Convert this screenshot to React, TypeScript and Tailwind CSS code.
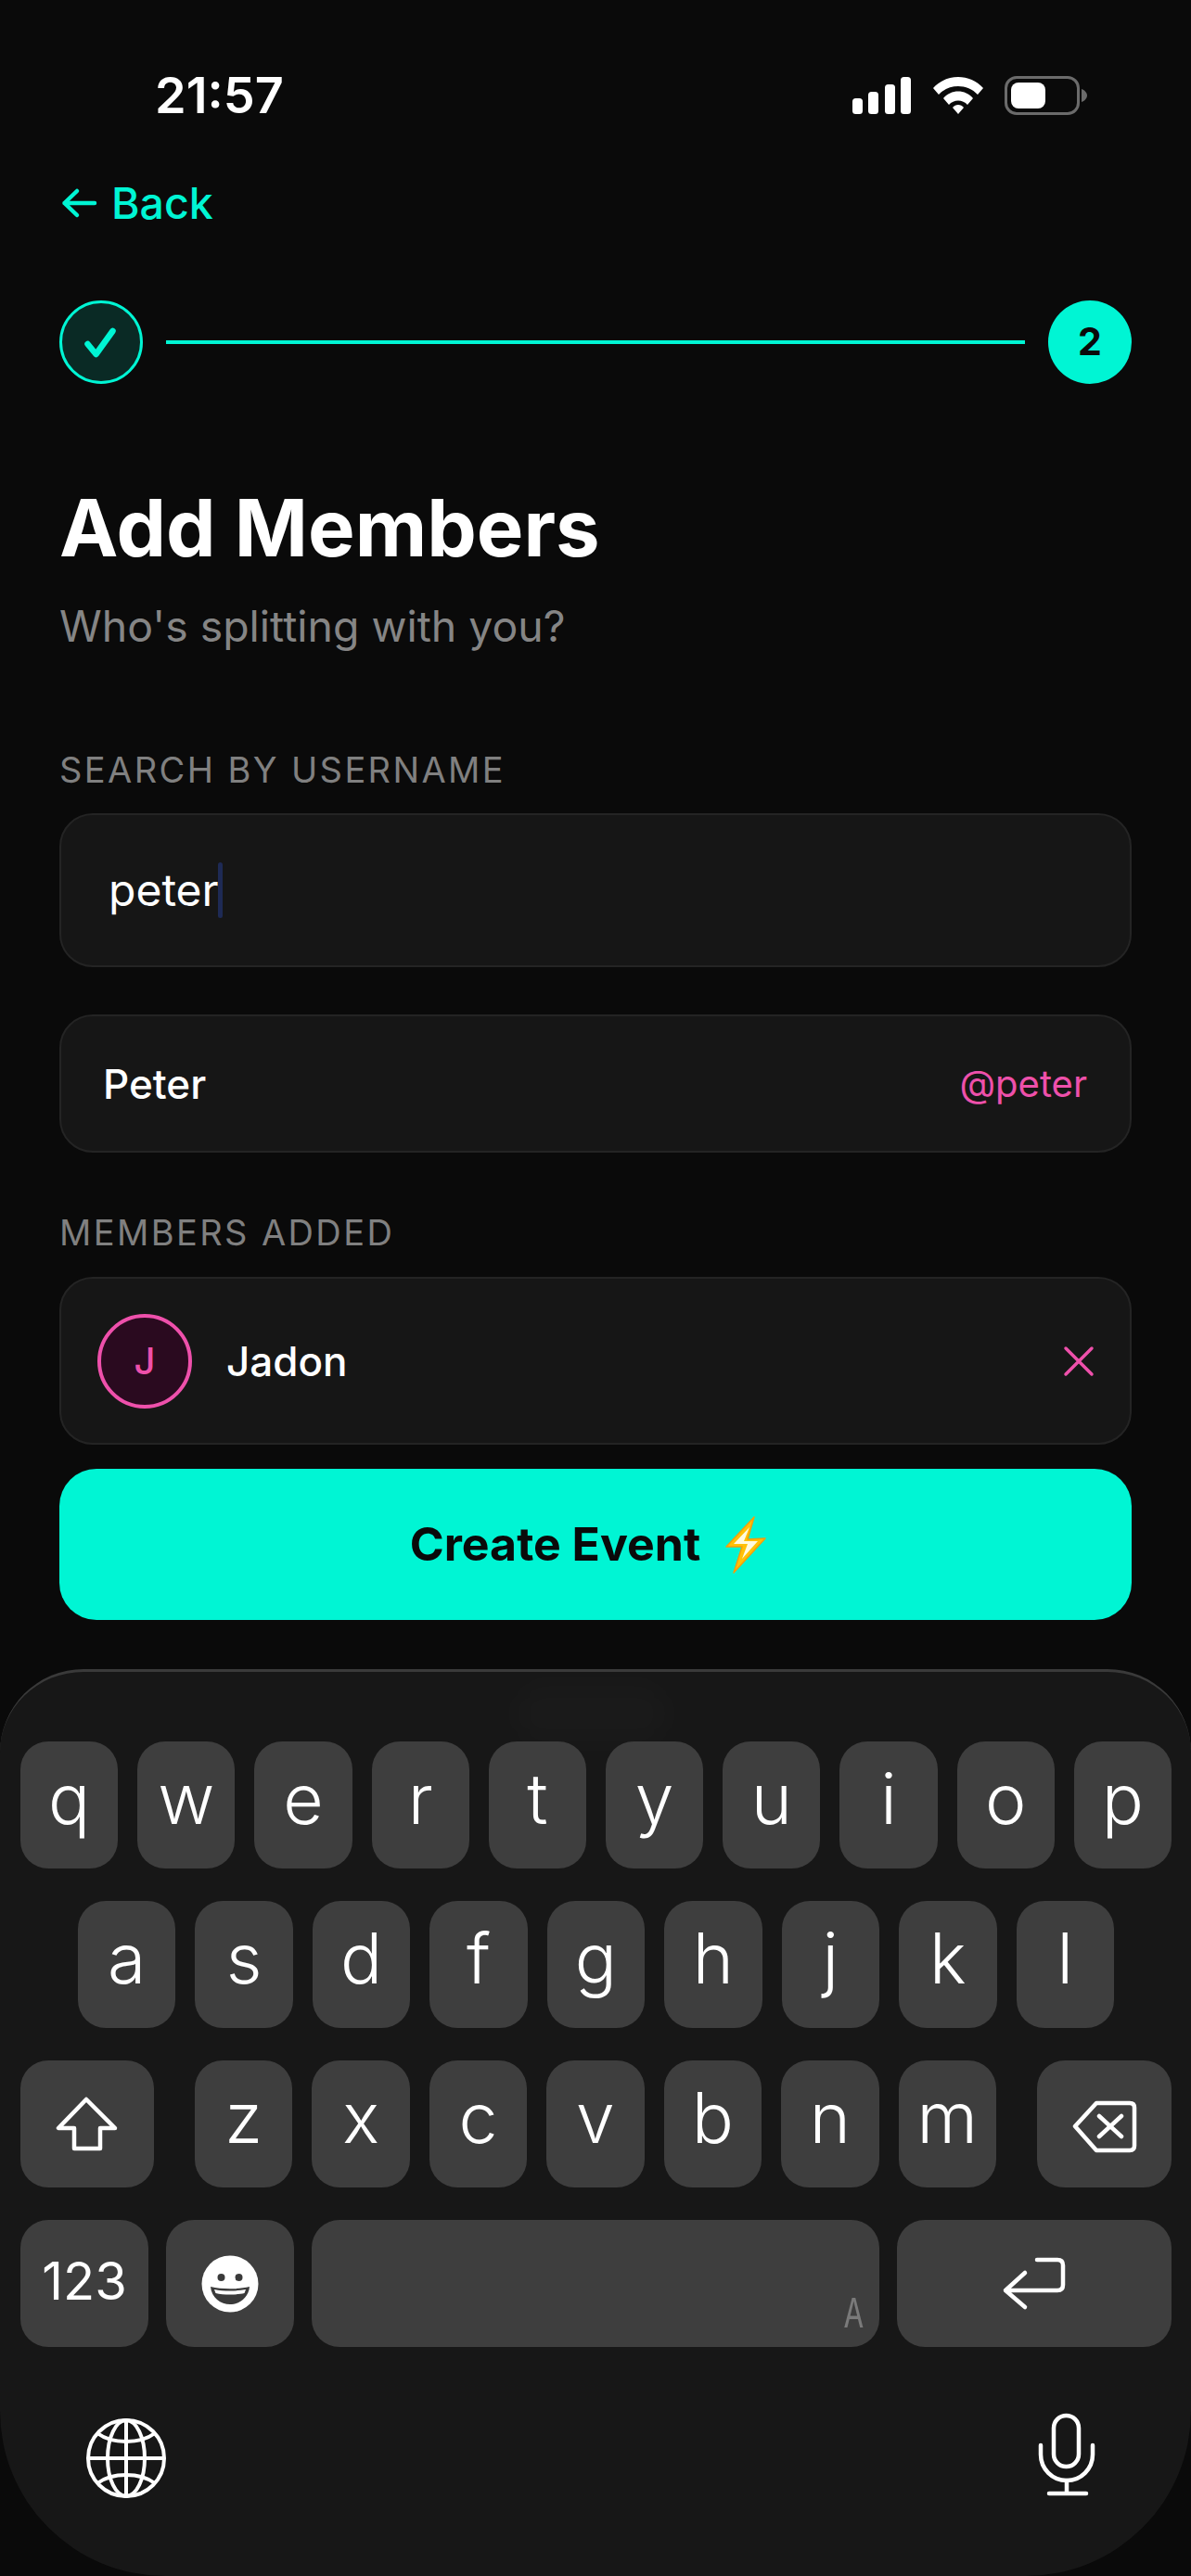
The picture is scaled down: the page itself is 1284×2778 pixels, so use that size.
import React from 'react';

const ROW_1 = ['q', 'w', 'e', 'r', 't', 'y', 'u', 'i', 'o', 'p'];
const ROW_2 = ['a', 's', 'd', 'f', 'g', 'h', 'j', 'k', 'l'];
const ROW_3 = ['z', 'x', 'c', 'v', 'b', 'n', 'm'];

const keyClass =
  'h-[137px] rounded-[30px] bg-[#3e3e3e] flex items-center justify-center text-white';

function LetterKey({ letter }: { letter: string }) {
  return <div className={`${keyClass} flex-1 min-w-0 text-[75px] font-[350] pb-[12px]`}>{letter}</div>;
}

function StatusIcons() {
  return (
    <div className="flex items-center">
      {/* signal */}
      <svg width="64" height="42" viewBox="0 0 64 42" fill="#fff">
        <rect x="0" y="24" width="11" height="17" rx="3.5" />
        <rect x="17" y="17" width="11" height="24" rx="3.5" />
        <rect x="35" y="9" width="11" height="32" rx="3.5" />
        <rect x="52" y="1" width="11" height="40" rx="3.5" />
      </svg>
      {/* wifi */}
      <svg className="ml-[22px]" width="56" height="42" viewBox="0 0 56 42" fill="#fff">
        <path d="M1 13 C15 -3 41 -3 55 13 L49 20 C38 8 18 8 7 20 Z" />
        <path d="M12 24 C20 14 36 14 44 24 L38 31 C33 25 23 25 18 31 Z" />
        <path d="M22 34 C25 30 31 30 34 34 L28 41 Z" />
      </svg>
      {/* battery */}
      <div className="ml-[22px] w-[81px] h-[42px] rounded-[13px] border-[3px] border-[#6b6b6b] p-[4px]">
        <div className="w-[37px] h-full rounded-[8px] bg-white" />
      </div>
      <svg className="ml-[2px]" width="6" height="14" viewBox="0 0 6 14" fill="#6b6b6b">
        <path d="M0 0 C3 1 6 4 6 7 C6 10 3 13 0 14 Z" />
      </svg>
    </div>
  );
}

function GlobeIcon() {
  return (
    <svg width="90" height="90" viewBox="0 0 90 90" fill="none" stroke="#fff" strokeWidth="4">
      <circle cx="45" cy="45" r="41" />
      <ellipse cx="45" cy="45" rx="20" ry="41" />
      <path d="M45 4 V86 M4 45 H86" />
      <path d="M14 18 C30 30 60 30 76 18" />
      <path d="M14 72 C30 60 60 60 76 72" />
    </svg>
  );
}

function MicIcon() {
  return (
    <svg width="68" height="92" viewBox="0 0 68 92" fill="none" stroke="#fff" strokeWidth="4.5" strokeLinecap="round">
      <rect x="20" y="5" width="27" height="55" rx="13.5" />
      <path d="M6 37 V47 A28 28 0 0 0 62 47 V37" />
      <path d="M34 75 V88" />
      <path d="M15 89 H55" />
    </svg>
  );
}

export default function App() {
  return (
    <div className="w-[1284px] h-[2778px] bg-[#0a0a0a] flex flex-col overflow-hidden font-['Inter',sans-serif]">
      {/* Status bar */}
      <div className="h-[126px] mt-[40px] flex items-center justify-between pl-[167px] pr-[112px] text-white">
        <span className="text-[54px] font-semibold leading-none">21:57</span>
        <StatusIcons />
      </div>

      <div className="px-[64px] flex flex-col">
        {/* Back */}
        <div className="mt-[24px] h-[58px] flex items-center gap-[14px] text-[#00f5d4] ml-[2px]">
          <svg width="40" height="40" viewBox="0 0 40 40" fill="none" stroke="#00f5d4" strokeWidth="4.5" strokeLinecap="round" strokeLinejoin="round">
            <path d="M17 7 L3.5 20 L17 33 M3.5 20 H36" />
          </svg>
          <span className="text-[46.5px] font-medium leading-none">Back</span>
        </div>

        {/* Stepper */}
        <div className="mt-[76px] flex items-center gap-[25px]">
          <div className="w-[90px] h-[90px] shrink-0 rounded-full border-[3px] border-[#00f5d4] bg-[#0a2a25] flex items-center justify-center">
            <svg width="44" height="44" viewBox="0 0 44 44" fill="none" stroke="#00f5d4" strokeWidth="6.5" strokeLinecap="round" strokeLinejoin="round">
              <path d="M7.5 24 L16.5 35 L34.5 10" />
            </svg>
          </div>
          <div className="flex-1 h-[4px] bg-[#00f5d4]" />
          <div className="w-[90px] h-[90px] shrink-0 rounded-full bg-[#00f5d4] flex items-center justify-center text-[41px] font-bold text-[#0a0a0a]">
            2
          </div>
        </div>

        {/* Title */}
        <h1 className="mt-[105px] text-[85px] leading-[102px] font-bold text-white">Add Members</h1>
        <p className="mt-[25px] text-[46.4px] leading-[58px] text-[#858585]">Who's splitting with you?</p>

        {/* Search */}
        <div className="mt-[104px] text-[38px] leading-[44px] tracking-[2.4px] text-[#808080]">SEARCH BY USERNAME</div>
        <div className="mt-[25px] h-[166px] rounded-[36px] bg-[#161616] border-2 border-[#242424] flex items-center pl-[51px] text-[48px] text-white">
          <span>peter</span>
          <span className="w-[5px] h-[60px] rounded-full bg-[#1e2a55] -ml-[1px]" />
        </div>

        {/* Search result */}
        <div className="mt-[51px] h-[149px] rounded-[36px] bg-[#161616] border-2 border-[#242424] flex items-center justify-between pl-[45px] pr-[46px]">
          <span className="text-[44px] font-medium text-white">Peter</span>
          <span className="text-[40px] text-[#ee50ab]">@peter</span>
        </div>

        {/* Members */}
        <div className="mt-[64px] text-[38px] leading-[44px] tracking-[2.4px] text-[#808080]">MEMBERS ADDED</div>
        <div className="mt-[26px] h-[181px] rounded-[36px] bg-[#161616] border-2 border-[#242424] flex items-center pl-[39px] pr-[38px]">
          <div className="w-[102px] h-[102px] rounded-full border-4 border-[#ee50ab] bg-[#2a0a1f] flex items-center justify-center text-[40px] font-medium text-[#ee50ab]">
            J
          </div>
          <span className="ml-[37px] flex-1 text-[44px] font-medium text-white">Jadon</span>
          <svg width="34" height="34" viewBox="0 0 34 34" fill="none" stroke="#ee50ab" strokeWidth="3.5" strokeLinecap="round">
            <path d="M3 3 L31 31 M31 3 L3 31" />
          </svg>
        </div>

        {/* Create */}
        <button className="mt-[26px] h-[163px] rounded-[40px] bg-[#00f5d4] flex items-center justify-center gap-[27px] pr-[16px] text-[50px] font-bold text-[#0a0a0a]">
          <span>Create Event</span>
          <svg width="44" height="62" viewBox="0 0 44 62">
            <path d="M31 1 L1 33 L18 33 L9 61 L43 24 L24 25 Z" fill="#ffc107" stroke="#f59e0b" strokeWidth="1.5" strokeLinejoin="round" />
            <path d="M26 12 L9 30 L24 30 L18 46 L35 27 L20 27 Z" fill="#fffbe0" />
          </svg>
        </button>
      </div>

      {/* Keyboard */}
      <div className="relative mt-[53px] flex-1 bg-[#171717] rounded-t-[90px] rounded-b-[178px] border-t-[3px] border-[#3a3a3a] pl-[22px] pr-[21px] pt-[75px] flex flex-col gap-[35px]">
        <div className="absolute left-[553px] top-[10px] w-[170px] h-[70px] rounded-[30px] bg-white/[0.015] blur-lg" />

        <div className="relative flex gap-[21px]">
          {ROW_1.map((k) => (
            <LetterKey key={k} letter={k} />
          ))}
        </div>

        <div className="flex gap-[21px] px-[62px]">
          {ROW_2.map((k) => (
            <LetterKey key={k} letter={k} />
          ))}
        </div>

        <div className="flex">
          <div className={`${keyClass} w-[144px] shrink-0`}>
            <svg width="68" height="60" viewBox="0 0 68 60" fill="none" stroke="#fff" strokeWidth="4.5" strokeLinejoin="round">
              <path d="M33 3 L3 34 H20 V56 H48 V34 H64 Z" />
            </svg>
          </div>
          <div className="flex-1 flex gap-[21px] mx-[44px]">
            {ROW_3.map((k) => (
              <LetterKey key={k} letter={k} />
            ))}
          </div>
          <div className={`${keyClass} w-[145px] shrink-0`}>
            <svg className="mt-[5px]" width="70" height="57" viewBox="0 0 70 57" fill="none" stroke="#fff" strokeWidth="4.5" strokeLinecap="round" strokeLinejoin="round">
              <path d="M26 3 H62 Q67 3 67 8 V49 Q67 54 62 54 H26 L3 28 Z" />
              <path d="M29 17 L53 39 M53 17 L29 39" />
            </svg>
          </div>
        </div>

        <div className="flex gap-[19px]">
          <div className={`${keyClass} w-[138px] shrink-0 text-[56px] font-normal pb-[6px]`}>123</div>
          <div className={`${keyClass} w-[138px] shrink-0`}>
            <svg width="62" height="62" viewBox="-31 -31 62 62">
              <circle cx="0" cy="0" r="30.5" fill="#fff" />
              <circle cx="-9.5" cy="-7" r="4" fill="#3a3a3a" />
              <circle cx="9.5" cy="-7" r="4" fill="#3a3a3a" />
              <path d="M-21 3 C-9 6 9 6 21 3 C20 15 10 22 0 22 C-10 22 -20 15 -21 3 Z" fill="#3a3a3a" />
              <path d="M-17 6 C-7 8 7 8 17 6 L15.5 10 C7 12 -7 12 -15.5 10 Z" fill="#fff" />
            </svg>
          </div>
          <div className={`${keyClass} relative w-[612px] shrink-0`}>
            <span className="absolute right-[13px] bottom-[10px] text-[48px] leading-none text-[#7a7a7a] font-['Liberation_Mono',monospace] scale-x-[0.7]">
              A
            </span>
          </div>
          <div className={`${keyClass} flex-1`}>
            <svg width="70" height="60" viewBox="0 0 70 60" fill="none" stroke="#fff" strokeWidth="4.5" strokeLinecap="round" strokeLinejoin="round">
              <path d="M25 18 L4 37 L25 55 M4 37 H60 Q66 37 66 31 V10 Q66 4 60 4 H38" />
            </svg>
          </div>
        </div>

        <div className="flex justify-between items-start mt-[34px] pl-[69px] pr-[79px]">
          <div className="mt-[6px]">
            <GlobeIcon />
          </div>
          <MicIcon />
        </div>
      </div>
    </div>
  );
}
